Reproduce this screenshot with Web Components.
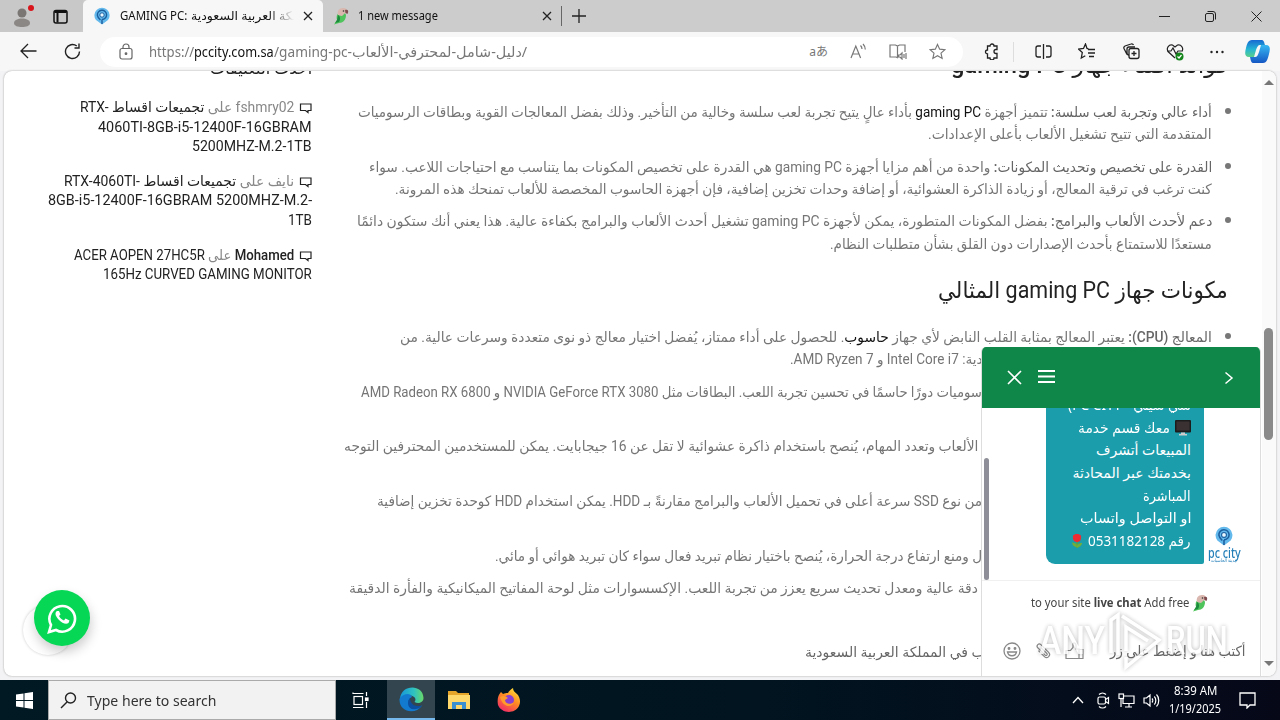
<!DOCTYPE html>
<html lang="ar">
<head>
<meta charset="utf-8">
<title>GAMING PC</title>
<style>
html,body{margin:0;height:100%;overflow:hidden}
body{font-family:"Noto Sans","DejaVu Sans",sans-serif;font-size:14px}
</style>
</head>
<body>
<desktop-screen></desktop-screen>
<script>
/* One line of text, stretched or condensed horizontally to the width in "w". */
const fits = new Set();
class FitText extends HTMLElement {
  constructor(){
    super();
    this.attachShadow({mode:'open'}).innerHTML = `<style>
      :host{display:block;white-space:nowrap;flex:none}
      span{display:inline-block;transform-origin:0 50%;white-space:pre}
      :host([dir=rtl]) span{transform-origin:100% 50%}
    </style><span><slot></slot></span>`;
  }
  connectedCallback(){ fits.add(this); this.fit(); }
  fit(){
    const w = +this.getAttribute('w'), s = this.shadowRoot.querySelector('span');
    this.style.width = w + 'px';
    s.style.transform = 'none';
    const n = s.offsetWidth;
    if(n) s.style.transform = `scaleX(${w/n})`;
  }
}
customElements.define('fit-text', FitText);

function define(name, css, html){
  customElements.define(name, class extends HTMLElement{
    constructor(){ super(); this.attachShadow({mode:'open'}); }
    connectedCallback(){ this.shadowRoot.innerHTML = `<style>*{box-sizing:border-box}svg{display:block;flex:none}${css}</style>${html}`; }
  });
}
const T = (w, t, c='') => `<fit-text dir="rtl" w="${w}" class="${c}">${t}</fit-text>`;
const L = (w, t, c='') => `<fit-text dir="ltr" w="${w}" class="${c}">${t}</fit-text>`;
const X = `<svg width="10" height="10" viewBox="0 0 10 10" stroke="#222" stroke-width="1.3"><path d="M1 1l8 8M9 1L1 9"/></svg>`;

const parrot = `<svg width="16" height="18" viewBox="0 0 16 18"><path d="M4 8c2-3 8-4 9 0 0 5-3 8-7 8l-5 1.500 3-4.500c-.500-2-.500-3 0-5z" fill="#4fc45c"/><path d="M5 8c-1-4 1-7 5-7 3 0 5 2 4.500 5-3-1-4 3-6 3z" fill="#d9b7ae"/><path d="M12 3c3-1 4 1 2.500 4l-2-1z" fill="#7d4a4e"/><circle cx="10.500" cy="4" r=".8" fill="#333"/><path d="M5 8c2 1 3 4 1 7l-4 1 2-3z" fill="#1c8a3c"/></svg>`;
const pin = (s) => `<svg width="${s}" height="${s}" viewBox="0 0 18 18"><path d="M9 17.500L3 13A7.600 7.600 0 1 1 15 13z" fill="#63b9ec"/><path d="M9 17v-4.500M9 12.500a4.600 4.600 0 1 0-4.600-4.200c.3 2 1.600 3.200 3 4.700" fill="none" stroke="#1c5f9f" stroke-width="1.400"/><circle cx="9" cy="8" r="2.200" fill="#e8f6ff" stroke="#1c5f9f"/></svg>`;

define('browser-tab', `:host{display:flex;align-items:center;height:32px;padding:0 10px 0 10px}
  :host([active]){background:#f7f7f7;border-radius:5px 5px 0 0}
  .t{flex:1;margin:0 0 0 9px;display:flex;overflow:hidden;height:20px}`,
  `<slot name="icon"></slot><div class="t"><slot></slot></div>${X}`);

define('tab-strip', `:host{display:flex;height:32px;background:#ccc;font-size:12px;line-height:20px;color:#111}
  .left{width:83px;background:#c8c8c8;display:flex;align-items:center;padding-left:13px;gap:18px;border-radius:0 0 5px 0}
  browser-tab.a{width:240px}browser-tab.b{width:239px}
  .fade{overflow:hidden;width:103px;display:flex;-webkit-mask:linear-gradient(90deg,#000 75%,transparent)}
  .sep{width:1px;height:20px;background:#666;margin:6px 10px 0 -1px}
  .plus{margin-top:9px}.win{margin-left:auto;display:flex;align-items:center;gap:35px;padding-right:18px}`,
  `<div class="left"><svg width="22" height="26" viewBox="0 0 22 26"><circle cx="9" cy="10" r="4.500" fill="#7a7674"/><path d="M1 20c0-6 16-6 16 0 0 3-4 4-8 4s-8-1-8-4z" fill="#8b8785"/><circle cx="18" cy="5" r="3" fill="#d9151c"/></svg>
  <svg width="15" height="15" viewBox="0 0 15 15" fill="none" stroke="#111" stroke-width="1.500"><rect x="1" y="1.500" width="13" height="12.500" rx="2"/><path d="M1.500 3h12M4.500 4v9.500" stroke-width="2"/></svg></div>
  <browser-tab active class="a"><span slot="icon">${pin(18)}</span>${L(67,'GAMING PC:')}<div class="fade" style="margin-left:4px">${L(128,'<bdi dir="rtl">المملكة العربية السعودية</bdi>')}</div></browser-tab>
  <browser-tab class="b"><span slot="icon">${parrot}</span>${L(80,'1 new message')}</browser-tab>
  <div class="sep"></div><svg class="plus" width="14" height="14" viewBox="0 0 14 14" stroke="#222" stroke-width="1.300"><path d="M7 0v14M0 7h14"/></svg>
  <div class="win" ><svg width="11" height="11" viewBox="0 0 11 11" stroke="#222"><path d="M0 5.500h11"/></svg>
  <svg width="11" height="11" viewBox="0 0 11 11" fill="none" stroke="#222"><rect x=".5" y="2.500" width="8" height="8" rx="1.500"/><path d="M2.500.5H8a2.500 2.500 0 0 1 2.500 2.500v5.500"/></svg>
  <svg width="11" height="11" viewBox="0 0 11 11" stroke="#222"><path d="M.5.5l10 10M10.500.5l-10 10"/></svg></div>`);

define('address-bar', `:host{display:flex;align-items:center;height:39px;background:#f7f7f7;padding:0 9px 0 20px}
  .nav{display:flex;gap:27px;width:80px}
  .box{width:863px;height:30px;border-radius:15px;background:#fff;display:flex;align-items:center;padding:0 17px 0 19px;font-size:14px;line-height:26px;color:#777}
  .lock{margin-right:16px}.k{color:#111}.r{margin-left:auto;display:flex;gap:22px;align-items:center;color:#777}
  .aa{font:12px "Noto Sans","Noto Sans CJK JP",sans-serif;line-height:20px}
  .tools{display:flex;align-items:center;justify-content:space-between;width:241px;margin-left:20px}.tools i{width:1px;height:20px;background:#ddd;margin:0 -5px 0 -7px}
  .t1{margin-right:-6px}.cp{margin-left:21px}`,
  `<div class="nav"><svg width="17" height="16" viewBox="0 0 17 16" fill="none" stroke="#222" stroke-width="1.300"><path d="M8 1L1 8l7 7M1 8h15.500"/></svg>
  <svg width="17" height="17" viewBox="0 0 17 17" fill="none" stroke="#222" stroke-width="1.400"><path d="M15.500 8.500A7 7 0 1 1 12.800 3M15 .500v4.500h-4.500" /></svg></div>
  <div class="box"><svg class="lock" width="14" height="17" viewBox="0 0 14 17" fill="none" stroke="#666" stroke-width="1.200"><rect x="1" y="5.500" width="12" height="10.500" rx="2"/><path d="M4 5.500V4a3 3 0 0 1 6 0v1.500"/><circle cx="7" cy="10.700" r=".8" fill="#666"/></svg>
  ${L(45,'https://')}${L(80,'pccity.com.sa','k')}${L(78,'/gaming-pc-')}${L(175,'<bdi dir="rtl">دليل-شامل-لمحترفي-الألعاب</bdi>/')}
  <div class="r"><span class="aa">aあ</span>
  <svg width="17" height="17" viewBox="0 0 17 17" fill="none" stroke="#777" stroke-width="1.200"><path d="M1 15L5.800 3 10.600 15M2.700 11h6.200M10.500 2.500c1 1 1.500 2 1.500 3.500M13 1c1.500 1.500 2.300 3 2.300 5.500"/></svg>
  <svg width="18" height="17" viewBox="0 0 18 17" fill="none" stroke="#777" stroke-width="1.200"><path d="M8.500 3v11M9 15l-2-1H1V2h5.500l2 1 2-1H16v7M9.500 12h1.500l2-2v6l-2-2H9.500zM15 11v4M17 10v6"/></svg>
  <svg width="17" height="17" viewBox="0 0 18 17" fill="none" stroke="#777" stroke-width="1.200"><path d="M9 1l2.300 5 5.500.6-4.100 3.700 1.200 5.500L9 13l-4.900 2.800 1.200-5.500L1.200 6.600 6.700 6z"/></svg></div></div>
  <div class="tools">
  <svg class="t1" width="17" height="17" viewBox="0 0 17 17" fill="none" stroke="#222" stroke-width="1.300"><path d="M4.500 3H7a2 2 0 0 1 4 0h3v3.500h-1a2 2 0 0 0 0 4h1V15h-3a2 2 0 0 1-4 0H4.500v-4a2 2 0 0 1 0-4z"/></svg><i></i>
  <svg width="17" height="17" viewBox="0 0 17 17" fill="none" stroke="#222" stroke-width="1.300"><path d="M6 3H3a2 2 0 0 0-2 2v7a2 2 0 0 0 2 2h3M11 3h3a2 2 0 0 1 2 2v7a2 2 0 0 1-2 2h-3M8.500 1v15"/></svg>
  <svg width="18" height="17" viewBox="0 0 18 17" fill="none" stroke="#222" stroke-width="1.300"><path d="M10.500 5.800l-1.500-.3L7.500 1l-2 4.500-5 .6L4.300 9.500l-1 5.500 4-2.200M10 6.500h7M10 10h7M11 13.500h5"/></svg>
  <svg width="17" height="17" viewBox="0 0 17 17" fill="none" stroke="#222" stroke-width="1.300"><path d="M4 11.500L1 5.500A2 2 0 0 1 2 3l6-2a2 2 0 0 1 2.500 1M6 12a2 2 0 0 1-2-2V6a2 2 0 0 1 2-2h6"/><rect x="6" y="5.500" width="10" height="10" rx="2"/><path d="M11 8v5M8.500 10.500h5"/></svg>
  <svg width="18" height="18" viewBox="0 0 18 18" fill="none" stroke="#222" stroke-width="1.200"><path d="M9 15L2 8.500C0 5 3 1 6.500 2L9 4l2.500-2C15 1 18 5 16 8.500M1 8h4l2-3 3 6 2-3h4"/><circle cx="13.500" cy="13.500" r="4" fill="#13851a" stroke="none"/><path d="M11.500 13.500l1.500 1.500 2.500-3" stroke="#fff"/></svg>
  <svg width="14" height="4" viewBox="0 0 14 4" fill="#222"><circle cx="1.500" cy="2" r="1.200"/><circle cx="7" cy="2" r="1.200"/><circle cx="12.500" cy="2" r="1.200"/></svg></div>
  <svg class="cp" width="25" height="27" viewBox="0 0 25 27"><defs><linearGradient id="a" x2="0" y2="1"><stop stop-color="#1769d2"/><stop offset=".55" stop-color="#25b6d4"/><stop offset="1" stop-color="#5bd08a"/></linearGradient><linearGradient id="b" x2="0" y2="1"><stop stop-color="#37b8f2"/><stop offset="1" stop-color="#1557c4"/></linearGradient></defs><path d="M7 2h9c3 0 3 2 4 5h-5c-2 0-3 2-4 5l-2 7H4c-5 0-4-5-3-9S3 2 7 2z" fill="url(#a)"/><path d="M18 25H9c-3 0-3-2-4-6h5c2 0 3-2 4-5l2-7h5c5 0 4 5 3 9s-2 9-6 9z" fill="url(#b)"/></svg>`);

define('comment-list', `:host{display:block;width:264px;font:14px/19.6px Roboto,"DejaVu Sans",sans-serif;color:#222;direction:rtl}
  .h{font-size:17px;font-weight:500;height:22px;line-height:22px;margin-bottom:19px}
  .i{margin-bottom:15px}.f{display:flex;align-items:center;gap:5px}.g{color:#888}fit-text{height:19.6px}svg{margin-top:1px}`,
  (()=>{const c='<svg width="13" height="12" viewBox="0 0 13 12" fill="none" stroke="#222" stroke-width="1.200"><path d="M1.500 2h10.500v6.500H9v2L6.500 8.500h-5z"/></svg>';
  const l=t=>`<bdi dir="ltr">${t}</bdi>`;
  return `<div class="h">${T(102,'أحدث التعليقات')}</div>
  <div class="i"><div class="f">${c}${T(214,`<span class="g">fshmry02 على</span> تجميعات اقساط ${l('RTX-')}`)}</div>${T(214,l('4060TI-8GB-i5-12400F-16GBRAM'))}${T(120,l('5200MHZ-M.2-1TB'))}</div>
  <div class="i"><div class="f">${c}${T(230,`<span class="g">نايف على</span> تجميعات اقساط ${l('RTX-4060TI-')}`)}</div>${T(264,l('8GB-i5-12400F-16GBRAM 5200MHZ-M.2-'))}${T(24,l('1TB'))}</div>
  <div class="i"><div class="f">${c}${T(220,`<b style="font-weight:500">Mohamed</b> <span class="g">على</span> ${l('ACER AOPEN 27HC5R')}`)}</div>${T(209,l('165Hz CURVED GAMING MONITOR'))}</div>`})());

define('guide-article', `:host{display:block;width:900px;direction:rtl;font:14.2px/22.3px Roboto,"DejaVu Sans",sans-serif;color:#757575}
  fit-text{height:22.3px}h2,h3{margin:0;font-weight:400;color:#222}
  h2{font-size:22px;line-height:28px;height:28px;font-weight:500}h3{font-size:23px;line-height:36px;height:36px;margin-top:18px}h2 fit-text,h3 fit-text{height:inherit}
  ul{list-style:none;margin:0;padding:0 16px 0 0}li{margin-bottom:10.100px;height:44.600px;position:relative}
  li.s{height:22.300px}li::before{content:"";position:absolute;right:-19px;top:7px;width:6px;height:6px;border-radius:50%;background:#777}
  b{font-weight:500;color:#666}.k{color:#111}
  .u1{margin-top:21px}.u2{margin-top:17px}.in{margin-right:230px}.r{margin-right:234px}.last{margin-top:19px}.last-t{margin-right:243px}`,
  `<h2>${T(277,'فوائد اقتناء جهاز gaming PC')}</h2>
  <ul class="u1">
  <li>${T(854,'<b>أداء عالي وتجربة لعب سلسة:</b> تتميز أجهزة <span class="k">gaming PC</span> بأداء عالٍ يتيح تجربة لعب سلسة وخالية من التأخير. وذلك بفضل المعالجات القوية وبطاقات الرسوميات')}${T(284,'المتقدمة التي تتيح تشغيل الألعاب بأعلى الإعدادات.')}</li>
  <li>${T(843,'<b>القدرة على تخصيص وتحديث المكونات:</b> واحدة من أهم مزايا أجهزة gaming PC هي القدرة على تخصيص المكونات بما يتناسب مع احتياجات اللاعب. سواء')}${T(817,'كنت ترغب في ترقية المعالج، أو زيادة الذاكرة العشوائية، أو إضافة وحدات تخزين إضافية، فإن أجهزة الحاسوب المخصصة للألعاب تمنحك هذه المرونة.')}</li>
  <li>${T(855,'<b>دعم لأحدث الألعاب والبرامج:</b> بفضل المكونات المتطورة، يمكن لأجهزة gaming PC تشغيل أحدث الألعاب والبرامج بكفاءة عالية. هذا يعني أنك ستكون دائمًا')}${T(382,'مستعدًا للاستمتاع بأحدث الإصدارات دون القلق بشأن متطلبات النظام.')}</li>
  </ul>
  <h3>${T(290,'مكونات جهاز gaming PC المثالي')}</h3>
  <ul class="u2">
  <li>${T(812,'<b>المعالج (CPU):</b> يعتبر المعالج بمثابة القلب النابض لأي جهاز <span class="k">حاسوب</span>. للحصول على أداء ممتاز، يُفضل اختيار معالج ذو نوى متعددة وسرعات عالية. من')}${T(192,'دية: Intel Core i7 و AMD Ryzen 7.','in')}</li>
  <li>${T(621,'سوميات دورًا حاسمًا في تحسين تجربة اللعب. البطاقات مثل NVIDIA GeForce RTX 3080 و AMD Radeon RX 6800','in')}</li>
  <li>${T(634,'الألعاب وتعدد المهام، يُنصح باستخدام ذاكرة عشوائية لا تقل عن 16 جيجابايت. يمكن للمستخدمين المحترفين التوجه','r')}</li>
  <li>${T(605,'من نوع SSD سرعة أعلى في تحميل الألعاب والبرامج مقارنةً بـ HDD. يمكن استخدام HDD كوحدة تخزين إضافية','in')}</li>
  <li class="s">${T(487,'ل ومنع ارتفاع درجة الحرارة، يُنصح باختيار نظام تبريد فعال سواء كان تبريد هوائي أو مائي.','in')}</li>
  <li>${T(629,'دقة عالية ومعدل تحديث سريع يعزز من تجربة اللعب. الإكسسوارات مثل لوحة المفاتيح الميكانيكية والفأرة الدقيقة','r')}</li>
  </ul><div class="last">${T(180,'<b>ب في المملكة العربية السعودية</b>','last-t')}</div>`);

define('page-scrollbar', `:host{display:flex;flex-direction:column;align-items:center;width:14px;background:#fafafa;padding:9px 1px 10px 0}
  .th{width:9px;height:112px;border-radius:5px;background:#8a8a8a;margin-top:243px}.d{margin-top:auto}`,
  `<svg width="10" height="5"><path d="M0 5L5 0l5 5z" fill="#777"/></svg><div class="th"></div><svg class="d" width="10" height="5"><path d="M0 0l5 5 5-5z" fill="#777"/></svg>`);

define('whatsapp-button', `:host{display:block;width:56px;height:56px}.w{position:absolute;left:-11px;top:15px;width:50px;height:50px;border-radius:50%;background:#fff;box-shadow:0 0 3px #ccc}
  .g{position:relative;width:56px;height:56px;border-radius:50%;background:#06d755;display:grid;place-items:center;box-shadow:1px 6px 12px #0003}`,
  `<div class="w"></div><div class="g"><svg width="30" height="31" viewBox="0 0 30 31"><path d="M2 29l2-7A12.800 12.800 0 1 1 9 27z" fill="none" stroke="#fff" stroke-width="2.600"/><path d="M10 8c-3 2-1 6 2 9s7 5 9.500 3l1-2.500-4-2-1.500 2c-2-.5-4-2.500-5-4.500l1.500-1.500-1.500-3.500z" fill="#fff"/></svg></div>`);

define('chat-widget', `:host{display:flex;flex-direction:column;width:280px;height:329px;background:#fff;border-radius:5px 5px 0 0;border-left:1px solid #ddd;border-right:1px solid #ddd;overflow:hidden}
  header{height:61px;flex:none;background:#0f8749;display:flex;align-items:center;padding:0 26px 0 25px}
  .body{height:173px;flex:none;display:flex;padding-left:2px;overflow:hidden;border-bottom:1px solid #f0f0f0}
  .th{width:5px;height:122px;border-radius:3px;background:#8e8e98;margin-top:50px}
  .bub{width:158px;height:172px;margin:-16px 0 0 57px;background:#1b9dac;border-radius:0 0 2px 9px;color:#fff;font-size:14px;line-height:22.700px;padding:2px 13px 0 0;direction:rtl}
  .row{display:flex;gap:5px;align-items:center;height:22.700px}fit-text{height:22.700px}
  .logo{margin:118px 0 0 3px;width:34px;display:flex;flex-direction:column;align-items:center;color:#247fb9;font-size:14px;line-height:13px}
  .logo fit-text{height:12px}.logo .small fit-text{height:5px}
  .ad{display:flex;align-items:center;justify-content:flex-end;gap:3px;padding-right:52px;height:46px;font-size:12px;line-height:22px;color:#444}
  .inp{display:flex;align-items:center;padding:0 15px 0 21px;height:52px;font-size:14px;line-height:24px;color:#666}.inp svg{margin-right:13px}.inp fit-text{margin-left:auto}
  .small{font-size:5px;line-height:5px;height:5px}`,
  `<header><svg width="15" height="15" viewBox="0 0 15 15" stroke="#fff" stroke-width="1.600"><path d="M1 1l13 13M14 1L1 14"/></svg>
  <svg style="margin:-2px 0 0 16px" width="17" height="14" viewBox="0 0 17 14" fill="#fff"><path d="M0 0h17v2H0zM0 5.500h17v2H0zM0 11h17v2H0z"/></svg>
  <svg style="margin-left:auto" width="10" height="14" viewBox="0 0 10 14" fill="none" stroke="#fff" stroke-width="1.500"><path d="M1.500 1.500L8 7l-6.500 5.500"/></svg></header>
  <div class="body"><div class="th"></div><div class="bub">
  ${T(123,'سي سيتي - PC CITY)')}
  <div class="row"><svg width="16" height="16" viewBox="0 0 16 16"><rect width="16" height="12.500" rx="1" fill="#1c1c1c"/><rect x="1.500" y="1.500" width="13" height="9" fill="#3a3133"/><path d="M6 12.500h4V14h2v1.500H4V14h2z" fill="#ccc"/></svg>${T(92,'معك قسم خدمة')}</div>
  ${T(95,'المبيعات أتشرف')}${T(119,'بخدمتك عبر المحادثة')}${T(48,'المباشرة')}${T(111,'او التواصل واتساب')}
  <div class="row">${T(103,'رقم 0531182128')}<svg width="12" height="15" viewBox="0 0 12 15"><path d="M6 7v7" stroke="#5fa637" stroke-width="1.500"/><path d="M6 13C3 13 1 11 1 8.500c3 0 5 1.500 5 3 1-2 3-2.500 5-2.500 0 2-2 4.500-5 4.500z" fill="#6fae3a"/><path d="M2 1.500L4.500 0h3L10 1.500C10.500 6 9 8 6 8S1.500 6 2 1.500z" fill="#ed2b33"/></svg></div>
  </div><div class="logo">${pin(20)}${L(33,'<b style="font-weight:500">pc city</b>')}<div class="small">${T(26,'مدينة الحاسبات')}</div></div></div>
  <div class="ad">${L(158,'to your site <b>live chat</b> Add free')}${parrot}</div>
  <div class="inp"><svg width="18" height="18" viewBox="0 0 18 18" fill="none" stroke="#888" stroke-width="1.300"><circle cx="9" cy="9" r="8"/><path d="M4.500 10c1 5 8 5 9 0z"/><circle cx="6" cy="6.500" r=".8" fill="#888"/><circle cx="12" cy="6.500" r=".8" fill="#888"/></svg>
  <svg width="18" height="18" viewBox="0 0 18 18" fill="none" stroke="#888" stroke-width="1.200"><g transform="rotate(-45 9 9)"><path d="M6 5v8.500a3 3 0 0 0 6 0V2.500a2.200 2.200 0 0 0-4.400 0V13a1.200 1.200 0 0 0 2.400 0V5" transform="translate(0 .5)"/></g></svg>
  <svg width="19" height="18" viewBox="0 0 19 18" fill="none" stroke="#888" stroke-width="1.200"><path d="M1 8.500h4.500L8 5.500V2c0-1.500 3-1.500 3 1v4h3v9.500H1zM14 7.500h4v9h-4z"/></svg>
  ${T(135,'أكتب هنا و إضغط على زر')}</div>`);

define('run-watermark', `:host{display:flex;align-items:center;gap:4px;width:192px;height:60px;filter:drop-shadow(0 0 2px #0005);opacity:.8;color:#fff;font:500 39px/40px Roboto,sans-serif;pointer-events:none}`,
  `${L(66,'ANY')}<svg width="53" height="60" viewBox="0 0 53 60" fill="none" stroke="#fff" stroke-width="3.500"><path d="M2 42V9l7-5v40M13 5l37 24-33 27V46M17 40V16l22 14"/></svg>${L(62,'RUN')}`);

define('task-bar', `:host{display:flex;height:40px;background:linear-gradient(90deg,#001923,#011420 60%,#060818);color:#fff}
  .c{width:48px;display:grid;place-items:center}.s{width:288px;background:#f2f2f2;border:1px solid #aaa;display:flex;align-items:center;gap:10px;padding-left:11px;color:#333;font-size:14.500px;line-height:26px}
  .e{width:48px;background:#33464f;border-bottom:2px solid #76b9ed;display:grid;place-items:center;margin-left:3px}
  .tray{margin-left:auto;display:flex;align-items:center;gap:8px;padding-right:24px}.clk{font-size:12px;line-height:18px;display:flex;flex-direction:column;align-items:center;width:54px}.clk fit-text{height:18px}`,
  `<div class="c"><svg width="17" height="17" viewBox="0 0 17 17" fill="#fff"><path d="M0 2.500l7.500-1V8H0zM8.500 1.300L17 0v8H8.500zM0 9h7.500v6.500L0 14.500zM8.500 9H17v8l-8.500-1.200z"/></svg></div>
  <div class="s"><svg width="17" height="17" viewBox="0 0 17 17" fill="none" stroke="#222" stroke-width="1.400"><circle cx="10.500" cy="6" r="5"/><path d="M7 10L1 16"/></svg>${L(129,'Type here to search')}</div>
  <div class="c"><svg width="17" height="17" viewBox="0 0 17 17" fill="none" stroke="#fff" stroke-width="1.200"><rect x="2" y="4.500" width="8.500" height="8"/><path d="M1 2V.600M1 1.500h10.500M1 15.500h10.500M14.500 0v4M14.500 10v6"/><rect x="13.500" y="6" width="2.500" height="2.500" fill="#fff"/></svg></div>
  <div class="e"><svg width="25" height="25" viewBox="0 0 25 25"><defs><linearGradient id="e"><stop stop-color="#1696da"/><stop offset=".6" stop-color="#2fc3c0"/><stop offset="1" stop-color="#6ad868"/></linearGradient></defs><path d="M1 12C2-3 24-3 24.500 11c0 5-6 6-9 4 4-5-5-10-14.500-3z" fill="url(#e)"/><path d="M1 11c4-5 11-5 12-1-5 2-5 9 3 10 3 .5 5-.5 7-1.500C17 28 0 26 .5 12z" fill="#127bd0"/><path d="M11 11c-4 4-2 13 6 11 3-.5 5-2 6-3.500-6 2-12-1-12-7.500z" fill="#0c4fa0"/></svg></div>
  <div class="c"><svg width="22" height="20" viewBox="0 0 22 20"><path d="M0 1h8l2 2h11v16H0z" fill="#e5a52b"/><path d="M0 5h22v14H0z" fill="#ffd86b"/><path d="M4 19v-7h14v7h-4v-4H8v4z" fill="#3a8fd0"/></svg></div>
  <div class="c" style="margin-left:2px"><svg width="24" height="24" viewBox="0 0 24 24"><defs><linearGradient id="f" x1=".8" x2=".2" y2="1"><stop stop-color="#ffe13a"/><stop offset=".45" stop-color="#ff8a22"/><stop offset="1" stop-color="#f0246c"/></linearGradient></defs><path d="M4 4l2 2c2-1 3-1 5-1 1-2 3-4 5-5 0 3 2 4 4 6 3 3 4 8 2 12-5 9-18 7-21-1C0 12 1 7 4 4z" fill="url(#f)"/><circle cx="12" cy="12" r="5" fill="#8a3fd0"/><path d="M3 9c3-2 6-1 8 1l-3 2c0 4 6 5 9 2-2 6-11 6-14-5z" fill="#ff9a2c"/></svg></div>
  <div class="tray"><svg width="12" height="8" viewBox="0 0 12 8" fill="none" stroke="#fff" stroke-width="1.300"><path d="M1 7l5-5.500L11 7"/></svg>
  <svg style="margin-left:4px" width="14" height="17" viewBox="0 0 14 17" fill="none" stroke="#fff" stroke-width="1.200"><rect x="2" y="5" width="7.500" height="7" rx="1.500"/><path d="M9.500 7.500l3-2v6l-3-2M3 2.500c2-2 5-2 7 0M3 14.500c2 2 5 2 7 0"/></svg>
  <svg width="17" height="15" viewBox="0 0 17 15" fill="none" stroke="#fff" stroke-width="1.200"><path d="M6 3h10v7.500H5V6M11 11v3M7 14h7"/><rect x="1" y="1" width="4.500" height="4.500"/><path d="M3 6v8"/></svg>
  <svg width="17" height="15" viewBox="0 0 17 15" fill="none" stroke="#fff" stroke-width="1.200"><path d="M1 5h2.500L7 2v11L3.500 10H1zM9 5.500c1 1 1 3 0 4M11.300 3.500c2 2 2 6 0 8M13.500 1.500c3 3 3 9 0 12"/></svg>
  <div class="clk">${L(43,'8:39 AM')}${L(52,'1/19/2025')}</div>
  <svg style="margin-left:9px" width="17" height="17" viewBox="0 0 17 17" fill="none" stroke="#fff" stroke-width="1.300"><path d="M1 1h15v12h-5l-3 3v-3H1z"/></svg></div>`);

define('desktop-screen', `:host{display:flex;flex-direction:column;width:1280px;height:720px;position:relative;background:#f3f3f5;overflow:hidden}
  .page{margin:0 4px 4px;height:605px;flex:none;background:#fff;border-radius:8px;display:flex;overflow:hidden;box-shadow:0 0 2px #999}
  comment-list{margin:-14px 0 0 44px}guide-article{margin:-19px 0 0 16px}page-scrollbar{margin-left:auto}
  whatsapp-button{position:absolute;left:34px;top:590px}chat-widget{position:absolute;left:981px;top:347px}run-watermark{position:absolute;left:1039px;top:611px}`,
  `<tab-strip></tab-strip><address-bar></address-bar><div class="page"><comment-list></comment-list><guide-article></guide-article><page-scrollbar></page-scrollbar></div><task-bar></task-bar>
  <whatsapp-button></whatsapp-button><chat-widget></chat-widget><run-watermark></run-watermark>`);

for (const f of fits) f.fit();
</script>
</body>
</html>
